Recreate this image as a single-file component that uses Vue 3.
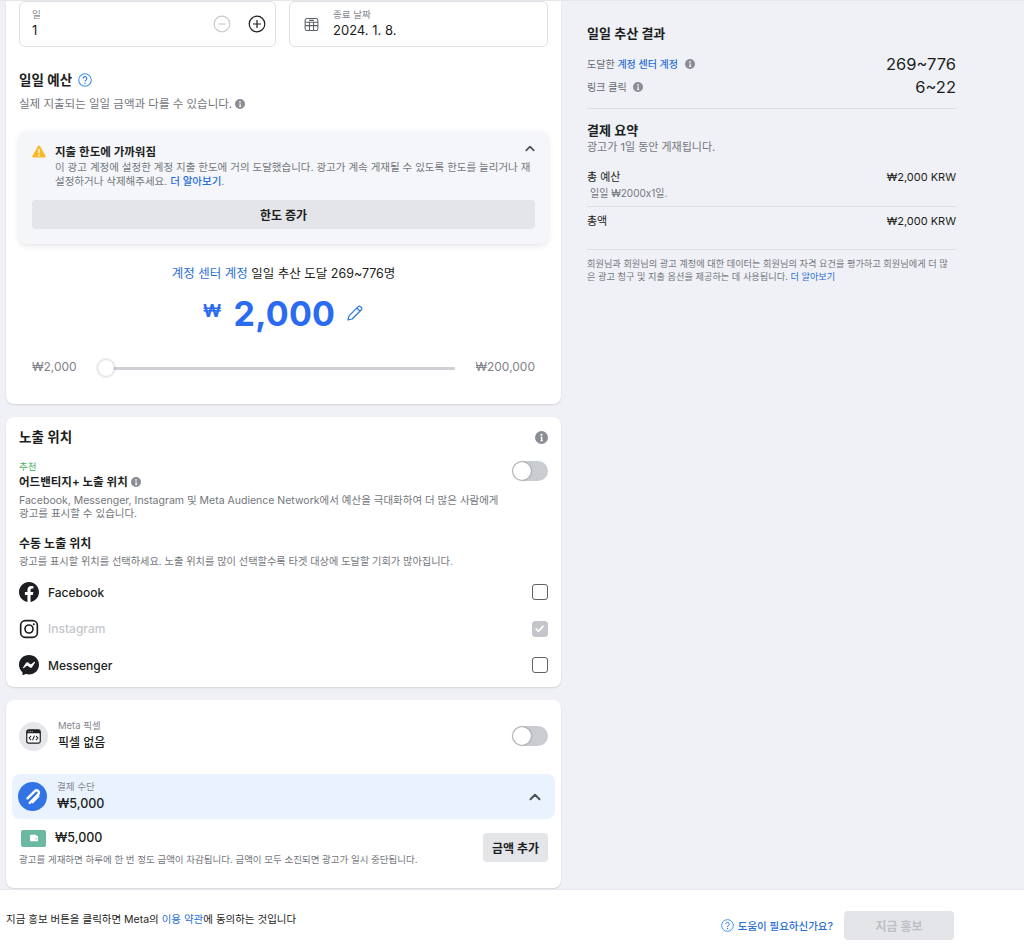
<script setup>
const placements = [
  { name: 'Facebook', kind: 'fb', checked: false, disabled: false },
  { name: 'Instagram', kind: 'ig', checked: true, disabled: true },
  { name: 'Messenger', kind: 'ms', checked: false, disabled: false },
]
</script>

<template>
  <div class="page">
    <svg class="defs" width="0" height="0">
      <symbol id="info" viewBox="0 0 16 16">
        <circle cx="8" cy="8" r="8" fill="#8a8d94" />
        <circle cx="8" cy="4.6" r="1.3" fill="#fff" />
        <path d="M6.6 7h2.5v4.6H10v1H6.4v-1h.9V8H6.6z" fill="#fff" />
      </symbol>
      <symbol id="help" viewBox="0 0 16 16">
        <circle cx="8" cy="8" r="7.2" fill="none" stroke="#3f92ea" stroke-width="1.2" />
        <path d="M5.9 6.3a2.1 2.1 0 1 1 3.3 1.7c-.8.5-1.2.9-1.2 1.8" fill="none" stroke="#2a6fd6" stroke-width="1.2" />
        <circle cx="8" cy="11.7" r=".8" fill="#2a6fd6" />
      </symbol>
      <symbol id="chev" viewBox="0 0 12 8">
        <path d="M1.5 6.2 6 1.8l4.5 4.4" fill="none" stroke="#4b4f56" stroke-width="2" stroke-linecap="round" stroke-linejoin="round" />
      </symbol>
    </svg>

    <main class="main">
      <div class="left">
        <section class="card budget">
          <div class="fields">
            <div class="field">
              <div class="field-text">
                <span class="field-label">일</span>
                <span class="field-value">1</span>
              </div>
              <svg class="round-btn muted" viewBox="0 0 18 18"><circle cx="9" cy="9" r="7.8" /><path d="M5.5 9h7" /></svg>
              <svg class="round-btn" viewBox="0 0 18 18"><circle cx="9" cy="9" r="7.8" /><path d="M5 9h8M9 5v8" /></svg>
            </div>
            <div class="field date">
              <svg class="cal" viewBox="0 0 16 16"><rect x="1.2" y="1.6" width="13.6" height="12.8" rx="2" /><path d="M1.2 5.6h13.6M1.2 9.2h13.6M5.8 5.6v8.8M10.2 5.6v8.8M5.5 3.6h5" /></svg>
              <div class="field-text">
                <span class="field-label">종료 날짜</span>
                <span class="field-value">2024. 1. 8.</span>
              </div>
            </div>
          </div>

          <h2 class="heading budget-title">일일 예산 <svg class="i16" ><use href="#help" /></svg></h2>
          <p class="sub">실제 지출되는 일일 금액과 다를 수 있습니다. <svg class="i10"><use href="#info" /></svg></p>

          <div class="alert">
            <div class="alert-head">
              <svg class="warn" viewBox="0 0 14 13"><path d="M6 1 .4 11a1 1 0 0 0 .9 1.5h11.4a1 1 0 0 0 .9-1.5L8 1a1.15 1.15 0 0 0-2 0z" fill="#f7b928" /><path d="M6.3 4h1.4l-.2 4.6h-1zM7 9.4a.9.9 0 1 1 0 1.8.9.9 0 0 1 0-1.8z" fill="#fff" /></svg>
              <strong class="alert-title">지출 한도에 가까워짐</strong>
              <svg class="alert-chev"><use href="#chev" /></svg>
            </div>
            <p class="alert-body">이 광고 계정에 설정한 계정 지출 한도에 거의 도달했습니다. 광고가 계속 게재될 수 있도록 한도를 늘리거나 재설정하거나 삭제해주세요. <a class="link strong">더 알아보기</a>.</p>
            <button class="btn wide">한도 증가</button>
          </div>

          <p class="reach"><a class="link">계정 센터 계정</a> 일일 추산 도달 269~776명</p>
          <div class="amount">
            <span class="won">₩</span>
            <span class="value">2,000</span>
            <svg class="pencil" viewBox="0 0 18 18"><path d="M2 16l1-4.2L12.2 2.6a1.6 1.6 0 0 1 2.3 0l.9.9a1.6 1.6 0 0 1 0 2.3L6.2 15zM10.8 4l3.2 3.2" /></svg>
          </div>
          <div class="slider">
            <span>₩2,000</span>
            <div class="track"><i class="thumb"></i></div>
            <span>₩200,000</span>
          </div>
        </section>

        <section class="card place">
          <div class="place-head">
            <h2 class="heading">노출 위치</h2>
            <svg class="i13"><use href="#info" /></svg>
          </div>
          <div class="adv">
            <div class="adv-text">
              <span class="rec">추천</span>
              <strong class="adv-title">어드밴티지+ 노출 위치 <svg class="i10"><use href="#info" /></svg></strong>
              <p class="adv-desc">Facebook, Messenger, Instagram 및 Meta Audience Network에서 예산을 극대화하여 더 많은 사람에게 광고를 표시할 수 있습니다.</p>
            </div>
            <span class="toggle"><i></i></span>
          </div>
          <strong class="manual">수동 노출 위치</strong>
          <p class="manual-desc">광고를 표시할 위치를 선택하세요. 노출 위치를 많이 선택할수록 타겟 대상에 도달할 기회가 많아집니다.</p>
          <ul class="rows">
            <li v-for="p in placements" :key="p.name" class="row" :class="{ off: p.disabled }">
              <svg v-if="p.kind === 'fb'" class="brand" viewBox="0 0 24 24"><path d="M24 12.07C24 5.4 18.63 0 12 0S0 5.4 0 12.07c0 6.03 4.39 11.02 10.13 11.93v-8.44H7.08v-3.49h3.05V9.41c0-3.02 1.79-4.69 4.53-4.69 1.31 0 2.68.24 2.68.24v2.97h-1.51c-1.49 0-1.96.93-1.96 1.89v2.25h3.33l-.53 3.49h-2.8V24C19.61 23.09 24 18.1 24 12.07z" fill="#1c1e21" /></svg>
              <svg v-else-if="p.kind === 'ig'" class="brand" viewBox="0 0 24 24" fill="none" stroke="#1c1e21" stroke-width="2"><rect x="2" y="2" width="20" height="20" rx="5.5" /><circle cx="12" cy="12" r="4.8" /><circle cx="17.8" cy="6.2" r="1.2" fill="#1c1e21" stroke="none" /></svg>
              <svg v-else class="brand" viewBox="0 0 24 24"><path d="M12 0C5.24 0 0 4.95 0 11.64c0 3.5 1.43 6.52 3.77 8.61.2.18.31.42.32.68l.06 2.14c.02.68.72 1.12 1.34.85l2.38-1.05c.2-.09.43-.11.64-.05 1.1.3 2.26.46 3.49.46 6.76 0 12-4.95 12-11.64S18.76 0 12 0zm7.2 8.96l-3.52 5.59c-.56.89-1.76 1.11-2.6.48l-2.8-2.1a.72.72 0 0 0-.87 0l-3.78 2.87c-.5.38-1.16-.22-.82-.76l3.52-5.59c.56-.89 1.76-1.11 2.6-.48l2.8 2.1c.26.19.61.19.87 0l3.78-2.87c.5-.38 1.16.22.82.76z" fill="#1c1e21" /></svg>
              <span class="row-name">{{ p.name }}</span>
              <span class="check" :class="{ on: p.checked }">
                <svg v-if="p.checked" viewBox="0 0 12 12"><path d="M2.5 6.2 5 8.6l4.6-5" fill="none" stroke="#fff" stroke-width="1.6" /></svg>
              </span>
            </li>
          </ul>
        </section>

        <section class="card pay">
          <div class="pixel">
            <span class="circle">
              <svg viewBox="0 0 16 16" class="code"><rect x=".8" y="1" width="14.4" height="14" rx="2" fill="#fff" stroke="#1c1e21" stroke-width="1.3" /><path d="M.8 3a2 2 0 0 1 2-2h10.4a2 2 0 0 1 2 2v1.6H.8z" fill="#1c1e21" /><path d="M5.4 7.4 3.4 9.6l2 2.2M10.6 7.4l2 2.2-2 2.2M9 7l-2 5.2" fill="none" stroke="#1c1e21" stroke-width="1.1" /><path d="M2.6 2.8h.8M4.4 2.8h.8M6.2 2.8H7" stroke="#fff" stroke-width="1" /></svg>
            </span>
            <div class="stack">
              <span class="small-label">Meta 픽셀</span>
              <span class="stack-value">픽셀 없음</span>
            </div>
            <span class="toggle"><i></i></span>
          </div>
          <div class="method">
            <span class="circle blue">
              <svg viewBox="0 0 24 24" class="clip" fill="none" stroke="#fff" stroke-width="2.6" stroke-linecap="round"><path d="M6 13.5 14 5.5a2.6 2.6 0 0 1 3.7 3.7l-9.2 9.2" /><path d="M11.5 17.5l6.3-6.3" /></svg>
            </span>
            <div class="stack">
              <span class="small-label">결제 수단</span>
              <span class="stack-value num">₩5,000</span>
            </div>
            <svg class="method-chev"><use href="#chev" /></svg>
          </div>
          <div class="balance">
            <div class="balance-text">
              <div class="balance-top">
                <span class="wallet"><svg viewBox="0 0 12 10"><path d="M1 2a1.2 1.2 0 0 1 1.2-1.2H9V2.6h1.4a.6.6 0 0 1 .6.6v5.4a.6.6 0 0 1-.6.6H2.2A1.2 1.2 0 0 1 1 8z" fill="#fff" /><circle cx="8.6" cy="5.8" r=".9" fill="#6bb8a3" /></svg></span>
                <span class="stack-value num">₩5,000</span>
              </div>
              <p class="balance-desc">광고를 게재하면 하루에 한 번 정도 금액이 차감됩니다. 금액이 모두 소진되면 광고가 일시 중단됩니다.</p>
            </div>
            <button class="btn add">금액 추가</button>
          </div>
        </section>
      </div>

      <aside class="right">
        <h2 class="r-title">일일 추산 결과</h2>
        <div class="est first">
          <span class="est-label">도달한 <a class="link strong">계정 센터 계정</a> <svg class="i10 gap"><use href="#info" /></svg></span>
          <span class="est-value">269~776</span>
        </div>
        <div class="est">
          <span class="est-label">링크 클릭 <svg class="i10 gap"><use href="#info" /></svg></span>
          <span class="est-value">6~22</span>
        </div>
        <hr class="rule r1" />
        <h3 class="r-sub">결제 요약</h3>
        <p class="r-note">광고가 1일 동안 게재됩니다.</p>
        <div class="sum first-sum"><span>총 예산</span><span>₩2,000 KRW</span></div>
        <p class="sum-note">일일 ₩2000x1일.</p>
        <hr class="rule r2" />
        <div class="sum total"><span>총액</span><span>₩2,000 KRW</span></div>
        <hr class="rule r3" />
        <p class="legal">회원님과 회원님의 광고 계정에 대한 데이터는 회원님의 자격 요건을 평가하고 회원님에게 더 많은 광고 청구 및 지출 옵션을 제공하는 데 사용됩니다. <a class="link">더 알아보기</a></p>
      </aside>
    </main>

    <footer class="footer">
      <p class="terms">지금 홍보 버튼을 클릭하면 Meta의 <a class="link">이용 약관</a>에 동의하는 것입니다</p>
      <a class="need"><svg class="i13 need-i"><use href="#help" /></svg>도움이 필요하신가요?</a>
      <button class="promote" disabled>지금 홍보</button>
    </footer>
  </div>
</template>

<style>
html, body { margin: 0; padding: 0; }
</style>

<style scoped>
* { box-sizing: border-box; }
.page {
  width: 1024px; height: 948px; overflow: hidden; display: flex; flex-direction: column;
  background: #eff1f6; color: #1c1e21;
  font-family: Inter, "Noto Sans CJK KR", "Liberation Sans", sans-serif;
}
.defs { position: absolute; }
p, h2, h3, ul { margin: 0; padding: 0; }
.link { color: #2a6fd6; text-decoration: none; }
.strong { font-weight: 500; }
.main { height: 889px; display: flex; border-top: 1px solid #e6e8ec; }
.left { width: 555px; margin-left: 6px; flex: none; display: flex; flex-direction: column; gap: 13px; }
.card { background: #fff; border-radius: 8px; box-shadow: 0 1px 2px rgba(0,0,0,.12); padding: 0 13px; }

.budget { height: 403px; border-radius: 0 0 8px 8px; }
.fields { display: flex; gap: 13px; }
.field { flex: 1; height: 46px; border: 1px solid #dddfe3; border-radius: 6px; display: flex; align-items: center; padding: 0 9px 0 12px; }
.field.date { padding-left: 14px; }
.field-text { flex: 1; display: flex; flex-direction: column; }
.field-label { font-size: 9.5px; line-height: 13px; color: #85888e; }
.field-value { font-size: 13px; line-height: 19px; }
.round-btn { width: 18px; height: 18px; margin-left: 17px; fill: none; stroke: #1c1e21; stroke-width: 1.2; }
.round-btn.muted { stroke: #c9ccd1; margin-left: 0; }
.cal { width: 15px; height: 15px; margin-right: 14px; fill: none; stroke: #5c5f66; stroke-width: 1.1; }

.heading { font-size: 13.5px; line-height: 20px; font-weight: 600; }
.budget-title { margin-top: 23px; display: flex; align-items: center; gap: 6px; }
.i16 { width: 14px; height: 14px; }
.i10 { width: 10px; height: 10px; vertical-align: -1px; }
.i13 { width: 13px; height: 13px; }
.sub { margin-top: 5px; font-size: 11.5px; line-height: 18px; color: #73767c; }

.alert { margin-top: 18px; height: 113px; background: #f5f6f9; border-radius: 8px; box-shadow: 0 2px 6px rgba(0,0,0,.1); padding: 12px 13px; display: flex; flex-direction: column; }
.alert-head { display: flex; align-items: center; height: 16px; }
.warn { width: 14px; height: 13px; margin-right: 9px; margin-left: 0; }
.alert-title { flex: 1; font-size: 11.5px; font-weight: 600; }
.alert-chev { width: 10px; height: 7px; margin-top: -6px; }
.alert-body { margin: 2px 0 0 23px; font-size: 10.5px; line-height: 13.5px; color: #73767c; }
.btn { border: 0; background: #e4e5e9; border-radius: 4px; font: inherit; font-weight: 600; font-size: 12px; color: #1c1e21; }
.wide { margin-top: 12px; height: 29px; width: 100%; flex: none; }

.reach { margin-top: 21px; text-align: center; font-size: 12.5px; line-height: 18px; }
.amount { margin-top: 8px; height: 46px; display: flex; justify-content: center; align-items: center; color: #2a6bf2; font-weight: 700; }
.won { font-size: 18px; margin-top: -8px; margin-right: 12px; }
.value { font-size: 34px; line-height: 46px; letter-spacing: .2px; }
.pencil { width: 18px; height: 18px; margin-left: 11px; margin-top: -2px; fill: none; stroke: #2a78d6; stroke-width: 1.2; stroke-linejoin: round; }
.slider { margin-top: 20px; padding: 0 13px; display: flex; align-items: center; font-size: 12px; color: #7f8288; height: 18px; }
.track { flex: 1; height: 3px; background: #cfd0d6; margin: 4px 21px 0; position: relative; border-radius: 2px; }
.thumb { position: absolute; left: 0; top: -7px; width: 16px; height: 16px; background: #fff; border-radius: 50%; box-shadow: 0 0 3px rgba(0,0,0,.35); }

.place { height: 270px; padding-top: 10px; }
.place-head { display: flex; justify-content: space-between; align-items: center; }
.adv { margin-top: 13px; display: flex; justify-content: space-between; }
.adv-text { width: 490px; display: flex; flex-direction: column; }
.rec { font-size: 9.5px; line-height: 13px; color: #4bb35f; }
.adv-title { margin-top: 1px; font-size: 11.5px; line-height: 17px; font-weight: 600; }
.adv-desc { margin-top: 3px; font-size: 10.5px; line-height: 13px; color: #73767c; }
.toggle { flex: none; width: 36px; height: 20px; margin-top: 1px; border-radius: 10px; background: #c9ccd1; position: relative; }
.toggle i { position: absolute; left: 1px; top: 1px; width: 18px; height: 18px; border-radius: 50%; background: #fff; box-shadow: 0 0 2px rgba(0,0,0,.5); }
.manual { display: block; margin-top: 15px; font-size: 12px; line-height: 17px; font-weight: 600; }
.manual-desc { margin-top: 2px; font-size: 10.2px; line-height: 15px; color: #73767c; }
.rows { list-style: none; margin-top: 13px; display: flex; flex-direction: column; gap: 16.5px; }
.row { display: flex; align-items: center; height: 20px; }
.brand { width: 20px; height: 20px; margin-right: 9px; }
.row-name { flex: 1; font-size: 12px; font-weight: 500; }
.off .row-name { color: #c4c6cb; }
.check { width: 16px; height: 16px; border: 1.5px solid #5f6268; border-radius: 3px; margin-right: 0; }
.check.on { background: #c4c6cb; border-color: #c4c6cb; }
.check svg { display: block; width: 13px; height: 13px; }

.pay { height: 188px; padding-top: 21px; }
.pixel { display: flex; align-items: center; height: 30px; }
.circle { width: 29px; height: 29px; border-radius: 50%; background: #e6e7eb; display: flex; align-items: center; justify-content: center; flex: none; margin-right: 10px; }
.code { width: 15px; height: 15px; }
.blue { background: #3274e6; }
.clip { width: 22px; height: 22px; }
.stack { flex: 1; display: flex; flex-direction: column; }
.small-label { font-size: 9.5px; line-height: 14px; color: #85888e; }
.stack-value { font-size: 12px; line-height: 20px; font-weight: 500; }
.num { font-size: 12.5px; }
.pixel .toggle { margin-top: 0; }
.method { margin: 23px -7px 0; padding: 0 13px 0 6px; height: 45px; background: #e9f2fd; border-radius: 8px; display: flex; align-items: center; }
.method-chev { width: 12px; height: 8px; margin-right: 1px; }
.balance { margin-top: 9px; display: flex; justify-content: space-between; align-items: flex-start; }
.balance-top { display: flex; align-items: center; gap: 9px; padding-left: 2px; }
.wallet { width: 25px; height: 17px; background: #6bb8a3; border-radius: 2px; display: flex; align-items: center; justify-content: center; }
.wallet svg { width: 10px; height: 8px; }
.balance-desc { margin-top: 5px; font-size: 9.5px; line-height: 14px; color: #73767c; }
.add { width: 65px; height: 29px; margin-top: 5px; font-size: 12px; }

.right { flex: 1; padding: 23px 0 0 26px; width: 369px; display: block; }
.right > * { width: 369px; }
.r-title { font-size: 13px; line-height: 18px; font-weight: 600; }
.est { display: flex; justify-content: space-between; align-items: center; height: 23px; }
.est.first { margin-top: 10px; }
.est-label { font-size: 10px; color: #65686e; }
.gap { margin-left: 4px; }
.est-value { font-size: 16.5px; }
.rule { border: 0; height: 1px; background: #dcdee3; margin: 0; }
.r1 { margin-top: 10px; }
.r-sub { margin-top: 12px; font-size: 13px; line-height: 18px; font-weight: 600; }
.r-note { font-size: 11px; line-height: 16px; color: #73767c; }
.sum { display: flex; justify-content: space-between; font-size: 11px; line-height: 16px; }
.first-sum { margin-top: 14px; }
.sum-note { margin-top: 0; padding-left: 3px; font-size: 10px; line-height: 16px; color: #73767c; }
.r2 { margin-top: 5px; }
.total { margin-top: 6px; }
.r3 { margin-top: 20px; }
.legal { margin-top: 7px; font-size: 9.2px; line-height: 13px; color: #73767c; }

.footer { height: 59px; background: #fff; display: flex; align-items: center; padding: 0 70px 0 6px; border-top: 1px solid #e6e8ec; }
.terms { flex: 1; font-size: 10.5px; margin-top: -1px; }
.need { display: flex; align-items: center; font-size: 10.5px; color: #2a6fd6; font-weight: 500; margin-right: 11px; margin-top: 13px; }
.need-i { margin-right: 4px; }
.promote { width: 110px; height: 29px; margin-top: 13px; border: 0; border-radius: 4px; background: #e4e5e9; color: #bcc0c4; font: inherit; font-size: 12px; font-weight: 600; }
</style>
